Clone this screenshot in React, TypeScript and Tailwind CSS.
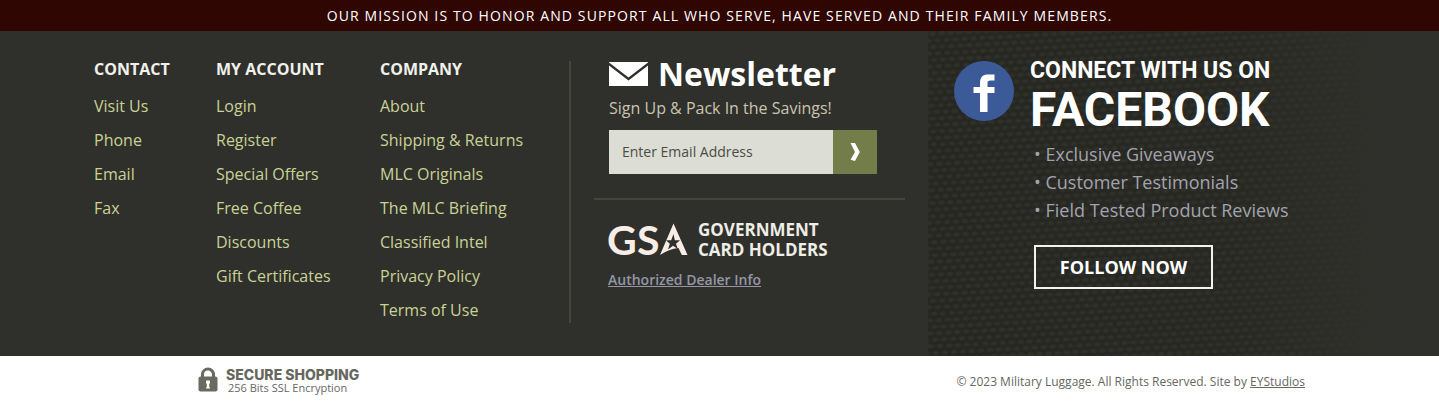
const columns = [
  { title: "CONTACT", width: "w-[122px]", links: ["Visit Us", "Phone", "Email", "Fax"] },
  {
    title: "MY ACCOUNT",
    width: "w-[164px]",
    links: ["Login", "Register", "Special Offers", "Free Coffee", "Discounts", "Gift Certificates"],
  },
  {
    title: "COMPANY",
    width: "w-[189px]",
    links: [
      "About",
      "Shipping & Returns",
      "MLC Originals",
      "The MLC Briefing",
      "Classified Intel",
      "Privacy Policy",
      "Terms of Use",
    ],
  },
];

const perks = ["Exclusive Giveaways", "Customer Testimonials", "Field Tested Product Reviews"];

function CanvasTexture() {
  return (
    <svg className="absolute inset-0 h-full w-full" aria-hidden="true">
      <defs>
        <pattern id="weave" width="9" height="13" patternUnits="userSpaceOnUse" patternTransform="rotate(-3)">
          <rect width="9" height="13" fill="#22231e" />
          <ellipse cx="4.5" cy="3.2" rx="3.8" ry="2.2" fill="#31322c" />
          <ellipse cx="0" cy="9.7" rx="3.8" ry="2.2" fill="#31322c" />
          <ellipse cx="9" cy="9.7" rx="3.8" ry="2.2" fill="#31322c" />
        </pattern>
        <filter id="soften">
          <feGaussianBlur stdDeviation="1.1" />
        </filter>
        <linearGradient id="fade">
          <stop offset="0" stopColor="#2f302b" stopOpacity="0" />
          <stop offset="0.6" stopColor="#2f302b" stopOpacity="0.15" />
          <stop offset="0.9" stopColor="#2f302b" stopOpacity="1" />
        </linearGradient>
      </defs>
      <rect width="100%" height="100%" fill="url(#weave)" filter="url(#soften)" />
      <rect width="100%" height="100%" fill="url(#fade)" />
    </svg>
  );
}

function GsaLogo() {
  return (
    <svg
      width="80"
      height="36"
      viewBox="0 0 80 36"
      role="img"
      aria-label="GSA"
      fill="#f8ece6"
      className="overflow-visible"
    >
      <text x="-1" y="33" fontFamily="Lato, sans-serif" fontWeight="700" fontSize="41">
        G
      </text>
      <text x="29" y="33" fontFamily="Lato, sans-serif" fontWeight="700" fontSize="41">
        S
      </text>
      <path d="M65.500 1.500L79.500 33H73.800L70.500 26Q61 27 52 33Z" />
      <path
        d="M65.500 12L66.800 18.300L72 18.300L68 21.800L69.800 27L65 23.800L60 27.500L61.800 21.800L58 18.300L63.200 18.300Z"
        fill="#2f302b"
      />
    </svg>
  );
}

export default function App() {
  return (
    <footer className="bg-white font-['Open_Sans',sans-serif] text-base">
      <p className="bg-[#300603] pt-1 pb-[3px] text-center text-sm leading-6 tracking-[0.08em] text-white">
        OUR MISSION IS TO HONOR AND SUPPORT ALL WHO SERVE, HAVE SERVED AND THEIR FAMILY MEMBERS.
      </p>

      <div className="grid grid-cols-[928fr_511fr] bg-[#2f302b]">
        <div className="flex pt-[30px] pb-[33px] pl-[94px]">
          {columns.map((column) => (
            <nav key={column.title} aria-label={column.title} className={`${column.width} shrink-0`}>
              <h2 className="leading-4 font-bold text-[#f1f1ec]">{column.title}</h2>
              <ul className="mt-[17px] flex flex-col gap-[10px]">
                {column.links.map((link) => (
                  <li key={link} className="leading-6 font-medium whitespace-nowrap text-[#c9d295]">
                    <a href="#">{link}</a>
                  </li>
                ))}
              </ul>
            </nav>
          ))}

          <div className="mr-[23px] min-h-[262px] flex-1 border-l-2 border-[#45453f] pl-[23px]">
            <section className="pl-[15px]">
              <h2 className="flex h-[26px] items-center gap-[10px] text-[32px] leading-[26px] font-bold text-white">
                <svg width="39" height="24" viewBox="0 0 39 24" fill="white" aria-hidden="true">
                  <path d="M0 0H39V0.500L19.500 15.500L0 0.500Z" />
                  <path d="M0 3.500L19.500 18.500L39 3.500V24H0Z" />
                </svg>
                Newsletter
              </h2>
              <p className="mt-[9px] leading-6 font-medium text-[#cbc3b1]">Sign Up &amp; Pack In the Savings!</p>
              <form className="mt-[10px] flex h-11 w-[268px]" onSubmit={(e) => e.preventDefault()}>
                <input
                  type="email"
                  aria-label="Email address"
                  placeholder="Enter Email Address"
                  className="min-w-0 flex-1 bg-[#dcddd5] px-[13px] text-sm text-[#4b4c46] outline-none placeholder:text-[#4b4c46]"
                />
                <button type="submit" aria-label="Subscribe" className="grid w-11 place-items-center bg-[#727d49]">
                  <svg width="10" height="18" viewBox="0 0 10 18" fill="white" aria-hidden="true">
                    <path d="M0.500 0H5L9.800 9L5 18L0.500 16.800L5 9Z" />
                  </svg>
                </button>
              </form>
            </section>

            <section className="mt-6 border-t-2 border-[#45453f] pt-5 pl-[14px]">
              <div className="flex items-center gap-[10px]">
                <GsaLogo />
                <h2 className="text-[17px] leading-5 font-bold text-[#eeeee6]">
                  GOVERNMENT
                  <br />
                  CARD HOLDERS
                </h2>
              </div>
              <a href="#" className="mt-[10px] inline-block text-sm leading-5 font-semibold text-[#9496a6] underline">
                Authorized Dealer Info
              </a>
            </section>
          </div>
        </div>

        <section className="relative">
          <CanvasTexture />
          <div className="relative flex gap-4 pt-[30px] pl-[26px]">
            <svg width="60" height="60" viewBox="0 0 60 60" className="shrink-0" aria-hidden="true">
              <circle cx="30" cy="30" r="30" fill="#3d5a98" />
              <path
                d="M26 51V32H19.500V26H26V22C26 16 29 13.500 34 13.500H40.500V19.500H36.500C34 19.500 33.500 20.500 33.500 22V26H40.500V32H33.500V51Z"
                fill="white"
              />
            </svg>
            <div>
              <h2 className="font-['Roboto',sans-serif] font-bold text-white">
                <span className="block text-[23px] leading-5">CONNECT WITH US ON</span>
                <span className="mt-1 block text-5xl leading-[50px]">FACEBOOK</span>
              </h2>
              <ul className="mt-[5px] ml-1 text-lg leading-7 text-[#a3a3ae]">
                {perks.map((perk) => (
                  <li key={perk}>• {perk}</li>
                ))}
              </ul>
              <a
                href="#"
                className="mt-[21px] ml-1 flex h-11 w-[179px] items-center justify-center border-2 border-[#f2f4ec] text-lg leading-6 font-bold text-white"
              >
                FOLLOW NOW
              </a>
            </div>
          </div>
        </section>
      </div>

      <div className="flex items-start justify-between pt-[11px] pr-[134px] pb-2 pl-[198px] text-xs text-[#66675f]">
        <div className="flex items-start gap-2">
          <svg width="20" height="26" viewBox="0 0 20 26" aria-hidden="true">
            <path d="M4.500 11V7.500a5.500 5.500 0 0 1 11 0V11" fill="none" stroke="#696b60" strokeWidth="3" />
            <rect x="0.500" y="9.500" width="19" height="15" rx="2" fill="#696b60" />
            <path d="M8 13.500H12V16.500H11.200V20.500H12V21.500H8V20.500H8.800V16.500H8Z" fill="white" />
          </svg>
          <p className="pt-[2px]">
            <strong className="block font-['Inter',sans-serif] text-sm leading-3 font-extrabold">
              SECURE SHOPPING
            </strong>
            <span className="block pl-[2px] text-[11px] leading-[14px] font-medium">256 Bits SSL Encryption</span>
          </p>
        </div>
        <p className="pt-[7px] leading-4">
          © 2023 Military Luggage. All Rights Reserved. Site by{" "}
          <a href="#" className="underline">
            EYStudios
          </a>
        </p>
      </div>
    </footer>
  );
}
